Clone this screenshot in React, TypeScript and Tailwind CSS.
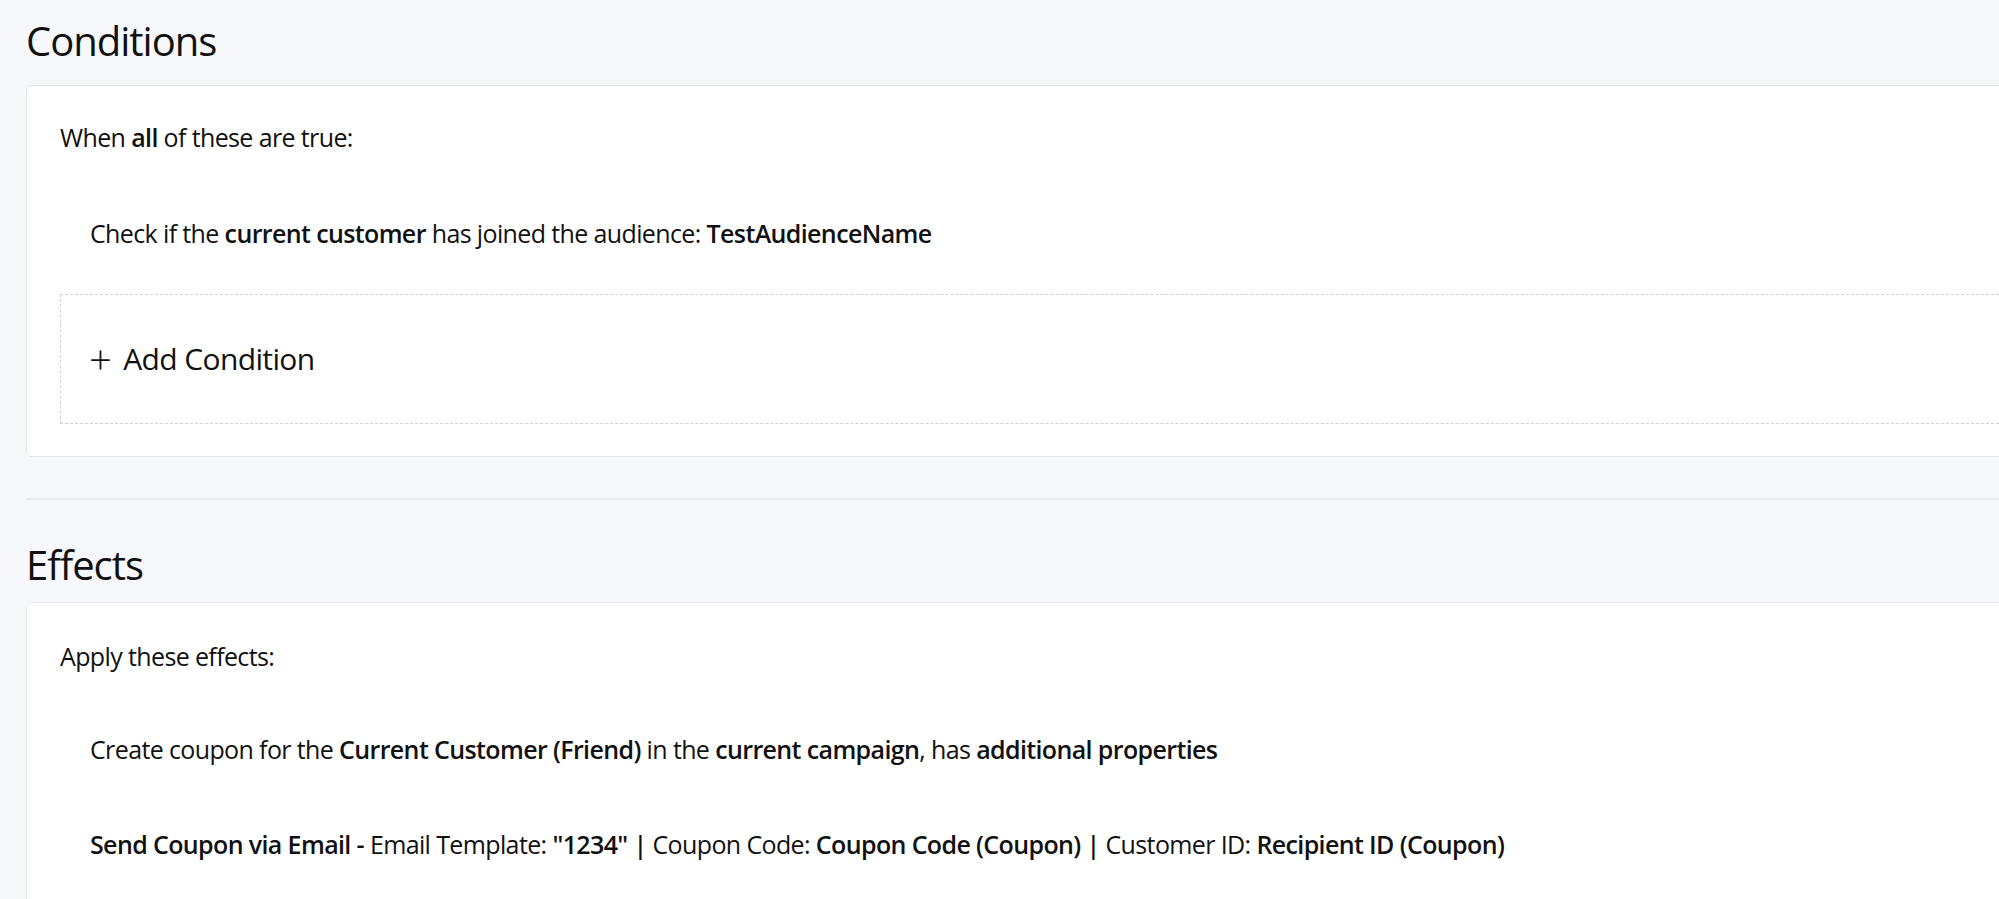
const font = { fontFamily: '"Open Sans", Lato, "Liberation Sans", sans-serif' };

export default function App() {
  return (
    <div className="h-[899px] w-full overflow-hidden bg-[#f7f8fb] text-[#111] pl-[26px]" style={font}>
      <h2 className="pt-[18px] text-[40px] leading-[46px] font-medium tracking-tight">Conditions</h2>
      <div className="mt-[21px] -mr-4 rounded-l-md border border-[#e3e5ea] bg-white pl-[33px] pt-[36px] pb-[32px] text-[25px] leading-[30px] tracking-tight">
        <p>
          When <b className="font-semibold">all</b> of these are true:
        </p>
        <p className="mt-[66px] pl-[30px]">
          Check if the <b className="font-semibold">current customer</b> has joined the audience: <b className="font-semibold">TestAudienceName</b>
        </p>
        <div className="mt-[46px] flex h-[130px] items-center gap-3 border-[1.5px] border-dashed border-[#cfd2d8] pl-[28px] text-[30px]">
          <span className="text-[40px] font-light leading-none">+</span>
          <span>Add Condition</span>
        </div>
      </div>
      <div className="mt-[41px] h-[2px] bg-[#e8eaee]" />
      <h2 className="mt-[42px] text-[40px] leading-[46px] font-medium tracking-tight">Effects</h2>
      <div className="mt-[14px] -mr-4 h-[400px] rounded-l-md border border-[#e3e5ea] bg-white pl-[33px] pt-[38px] text-[25px] leading-[30px] tracking-tight">
        <p>Apply these effects:</p>
        <p className="mt-[63px] pl-[30px]">
          Create coupon for the <b className="font-semibold">Current Customer (Friend)</b> in the <b className="font-semibold">current campaign</b>, has <b className="font-semibold">additional properties</b>
        </p>
        <p className="mt-[65px] pl-[30px]">
          <b className="font-semibold">Send Coupon via Email -</b> Email Template: <b className="font-semibold">"1234" |</b> Coupon Code: <b className="font-semibold">Coupon Code (Coupon) |</b> Customer ID: <b className="font-semibold">Recipient ID (Coupon)</b>
        </p>
      </div>
    </div>
  );
}
